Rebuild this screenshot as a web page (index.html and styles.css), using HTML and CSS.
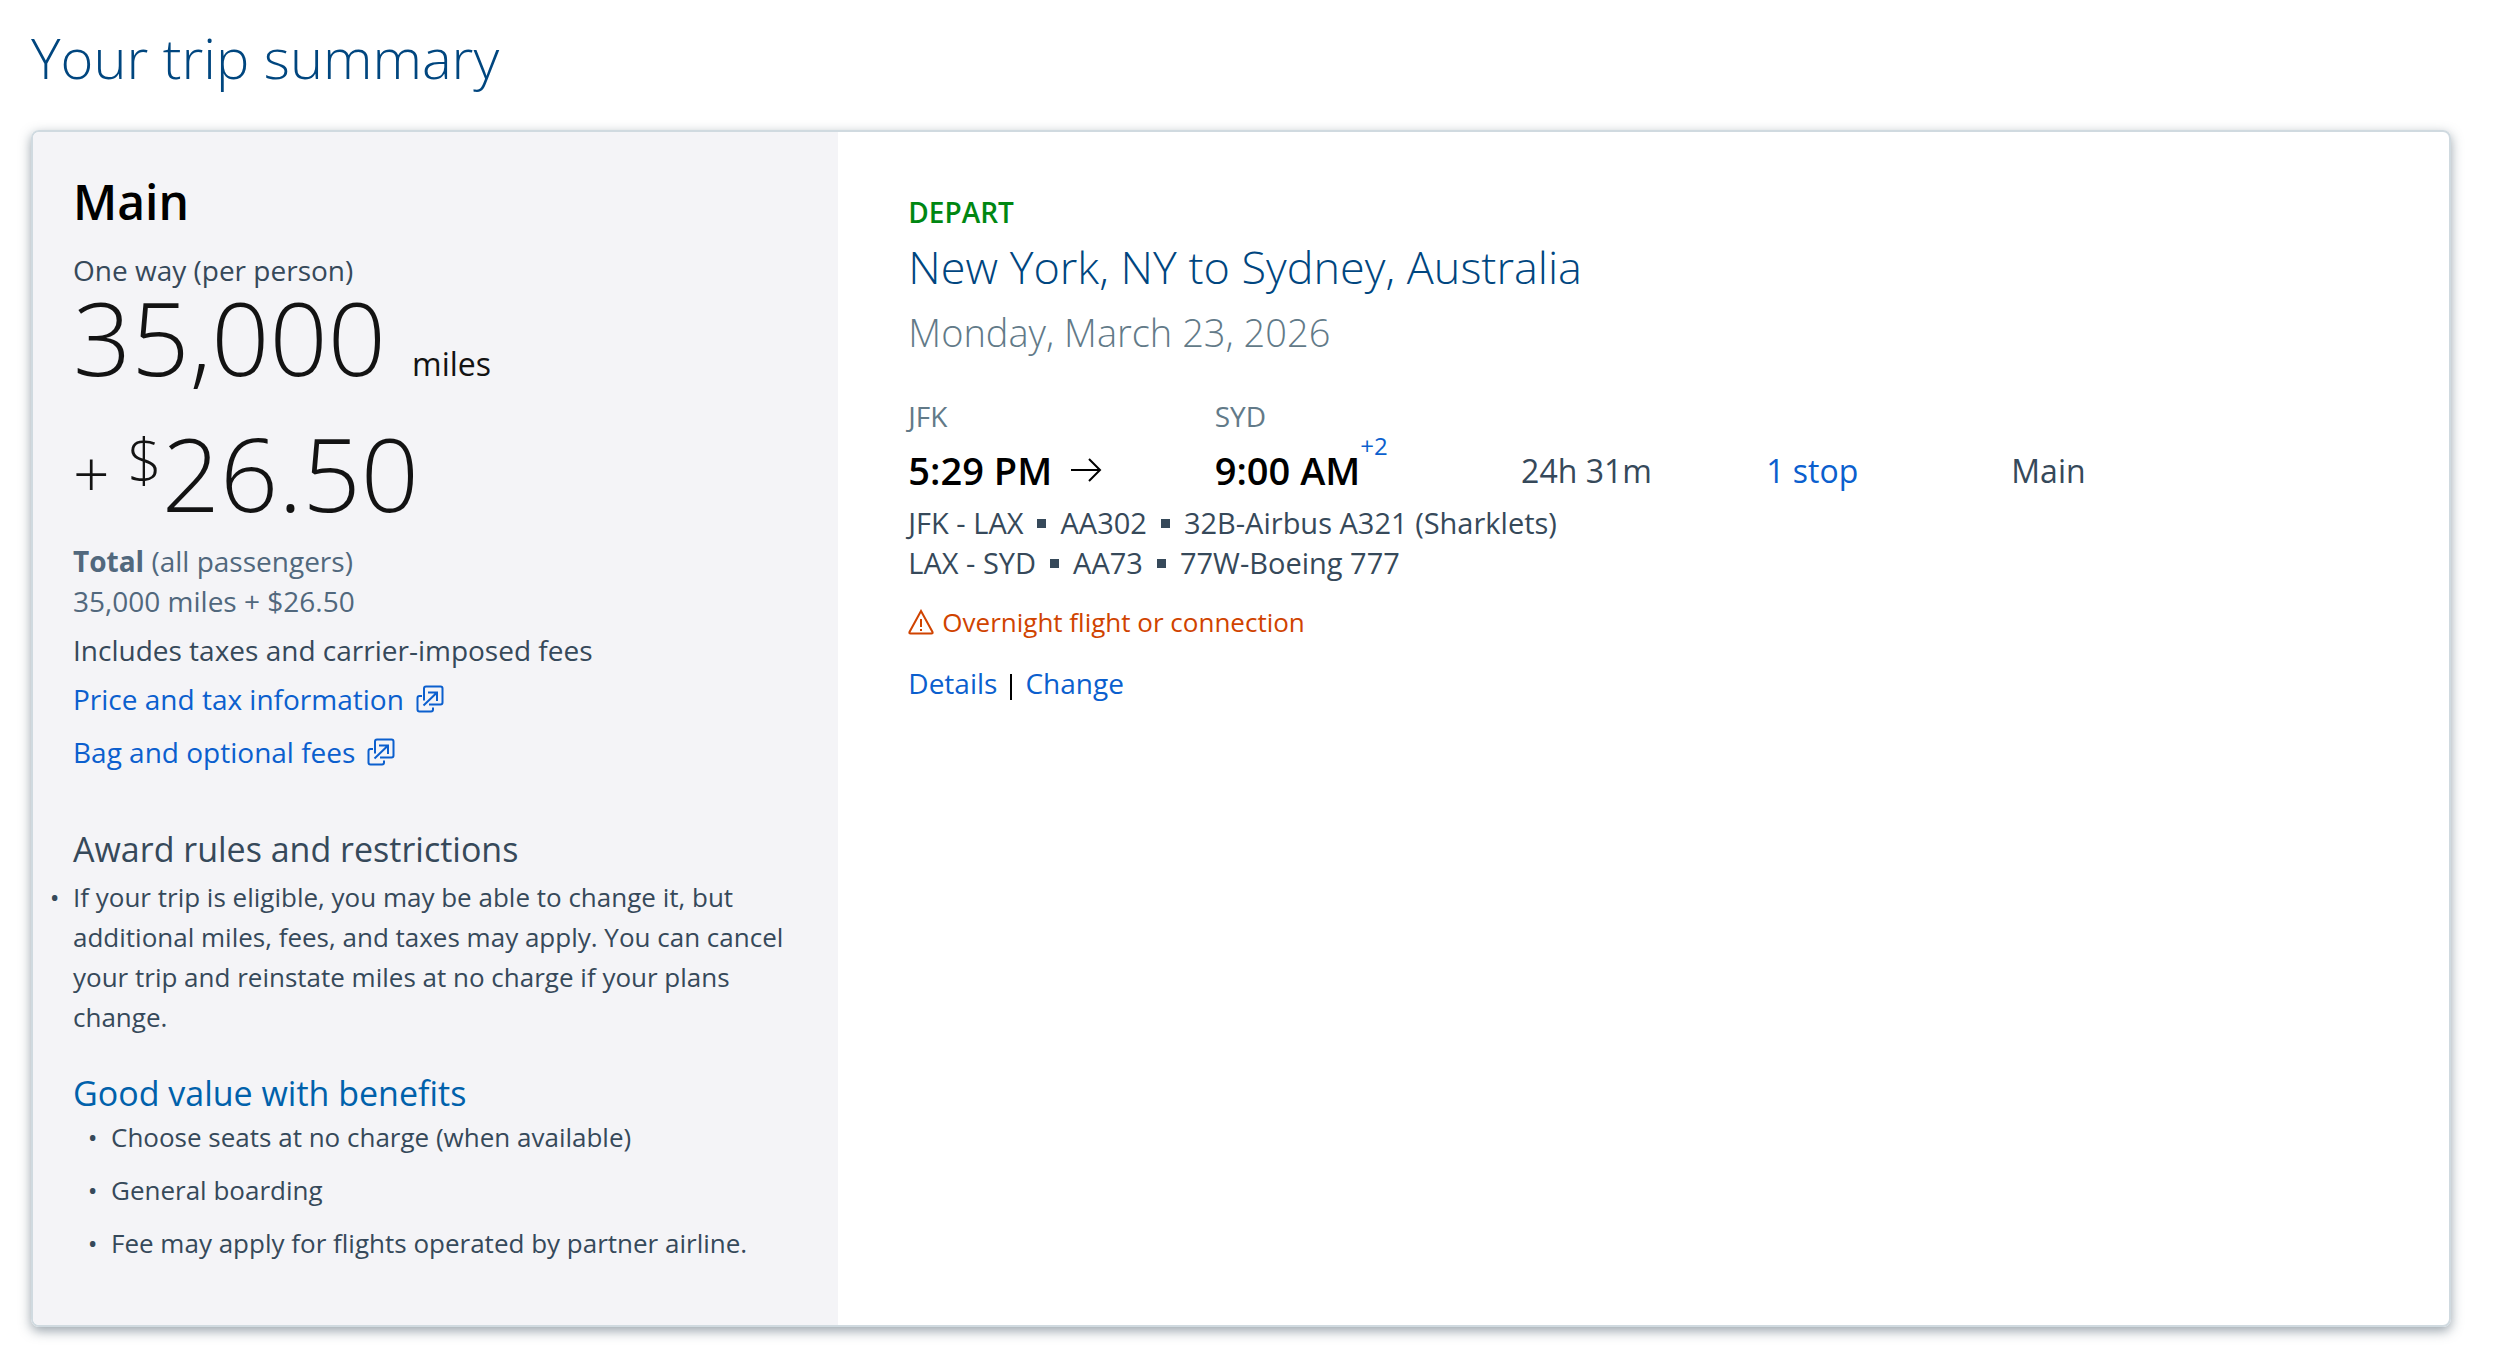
FILE: index.html
```html
<!DOCTYPE html>
<html lang="en">
<head>
    <meta charset="UTF-8">
    <meta name="viewport" content="width=device-width, initial-scale=1.0">
    <title>Your trip summary</title>
    <link rel="stylesheet" href="styles.css">
</head>
<body>
    <h1>Your trip summary</h1>
    <main class="trip-card">
        <section class="price-panel">
            <h2 class="fare-name">Main</h2>
            <p class="per-person">One way (per person)</p>
            <p class="price">35,000<span class="unit">miles</span></p>
            <p class="price price-cash"><span class="plus">+</span><span class="currency">$</span>26.50</p>
            <p class="total"><strong>Total</strong> (all passengers)<br>35,000 miles + $26.50</p>
            <p class="fees-note">Includes taxes and carrier-imposed fees</p>
            <a class="info-link" href="#price-info">Price and tax information
                <svg class="popup-icon" viewBox="0 0 28 28" aria-hidden="true">
                    <path d="M6 11H3.500Q1.500 11 1.500 13V24.500Q1.500 26.500 3.500 26.500H15Q17 26.500 17 24.500V22.500M8 15.500V3.500Q8 1.500 10 1.500H24.500Q26.500 1.500 26.500 3.500V17.500Q26.500 19.500 24.500 19.500H13M7.500 20.500L20.500 8M12 7.500H21V16"/>
                </svg>
            </a>
            <a class="info-link" href="#bag-fees">Bag and optional fees
                <svg class="popup-icon" viewBox="0 0 28 28" aria-hidden="true">
                    <path d="M6 11H3.500Q1.500 11 1.500 13V24.500Q1.500 26.500 3.500 26.500H15Q17 26.500 17 24.500V22.500M8 15.500V3.500Q8 1.500 10 1.500H24.500Q26.500 1.500 26.500 3.500V17.500Q26.500 19.500 24.500 19.500H13M7.500 20.500L20.500 8M12 7.500H21V16"/>
                </svg>
            </a>

            <h3 class="rules-title">Award rules and restrictions</h3>
            <ul class="rules">
                <li>If your trip is eligible, you may be able to change it, but additional miles, fees, and taxes may apply. You can cancel your trip and reinstate miles at no charge if your plans change.</li>
            </ul>

            <h3 class="benefits-title">Good value with benefits</h3>
            <ul class="benefits">
                <li>Choose seats at no charge (when available)</li>
                <li>General boarding</li>
                <li>Fee may apply for flights operated by partner airline.</li>
            </ul>
        </section>

        <section class="flight-panel">
            <p class="direction">DEPART</p>
            <h2 class="route">New York, NY to Sydney, Australia</h2>
            <p class="date">Monday, March 23, 2026</p>

            <div class="flight-row">
                <div>
                    <div class="airport">JFK</div>
                    <div class="time">5:29 PM
                        <svg class="arrow-icon" viewBox="0 0 32 28" aria-hidden="true">
                            <path d="M1 14H30M19 3L30 14L19 25"/>
                        </svg>
                    </div>
                </div>
                <div>
                    <div class="airport">SYD</div>
                    <div class="time">9:00 AM<a class="next-day" href="#arrival">+2</a></div>
                </div>
                <div class="detail">24h 31m</div>
                <div class="detail"><a href="#stops">1 stop</a></div>
                <div class="detail">Main</div>
            </div>

            <ul class="segments">
                <li><span>JFK - LAX</span><span>AA302</span><span>32B-Airbus A321 (Sharklets)</span></li>
                <li><span>LAX - SYD</span><span>AA73</span><span>77W-Boeing 777</span></li>
            </ul>

            <p class="warning">
                <svg class="warning-icon" viewBox="0 0 26 26" aria-hidden="true">
                    <path d="M13 2L24.500 23Q25 24.500 23.500 24.500H2.500Q1 24.500 1.500 23ZM13 10V18M13 20V22"/>
                </svg>
                Overnight flight or connection
            </p>

            <div class="actions">
                <a href="#details">Details</a>
                <a href="#change">Change</a>
            </div>
        </section>
    </main>
</body>
</html>
```
FILE: styles.css
```css
* {
    box-sizing: border-box;
}
body {
    font-family: "Open Sans", "Noto Sans", sans-serif;
    font-size: 28px;
    line-height: 40px;
    color: #36495a;
    background-color: #fff;
    margin: 0;
    padding: 21px 51px 26px 31px;
}
h1, h2, h3, p, ul {
    margin: 0;
    padding: 0;
    font-weight: 400;
}
a {
    color: #0b5fce;
    text-decoration: none;
}
h1 {
    font-size: 56px;
    font-weight: 300;
    line-height: 72px;
    color: #00467f;
    margin-bottom: 37px;
}
.trip-card {
    display: grid;
    grid-template-columns: 1fr 2fr;
    border: 2px solid #d0dae0;
    border-radius: 8px;
    box-shadow: 0 4px 12px rgba(54, 73, 90, 0.5);
    overflow: hidden;
}

/* price column */
.price-panel {
    background-color: #f4f4f7;
    padding: 40px 40px 62px;
}
.fare-name {
    font-size: 48px;
    font-weight: 600;
    line-height: 60px;
    color: #000;
    margin-bottom: 18px;
}
.price {
    font-size: 102px;
    font-weight: 300;
    line-height: 90px;
    color: #131313;
    margin-top: 2px;
}
.unit {
    font-size: 32px;
    font-weight: 400;
    line-height: 40px;
    margin-left: 26px;
}
.price-cash {
    display: flex;
    margin-top: 44px;
}
.plus {
    font-size: 64px;
    margin-right: 18px;
}
.currency {
    font-size: 60px;
    line-height: 64px;
}
.total {
    color: #51687d;
    margin-top: 23px;
}
.fees-note {
    margin-top: 9px;
}
.info-link {
    display: flex;
    align-items: center;
    gap: 12px;
    margin-top: 9px;
}
.info-link + .info-link {
    margin-top: 13px;
}
.popup-icon {
    width: 28px;
    height: 28px;
    fill: none;
    stroke: #0b5fce;
    stroke-width: 2;
}
.rules-title, .benefits-title {
    font-size: 34px;
    line-height: 44px;
}
.rules-title {
    margin-top: 55px;
    margin-bottom: 6px;
}
.benefits-title {
    color: #0061ab;
    margin-top: 34px;
    margin-bottom: 2px;
}
.rules, .benefits {
    font-size: 26px;
    list-style-type: "•\00a0\00a0";
}
.benefits {
    padding-left: 38px;
}
.benefits li + li {
    margin-top: 13px;
}

/* flight column */
.flight-panel {
    padding: 60px 70px;
}
.direction {
    font-weight: 600;
    color: #008712;
    margin-bottom: 5px;
}
.route {
    font-size: 45px;
    font-weight: 300;
    line-height: 60px;
    color: #00467f;
    margin-bottom: 9px;
}
.date {
    font-size: 38px;
    font-weight: 300;
    line-height: 52px;
    color: #627a88;
    margin-bottom: 38px;
}
.flight-row {
    display: grid;
    grid-template-columns: 5fr 5fr 4fr 4fr 6fr;
    align-items: end;
    margin-bottom: 3px;
}
.airport {
    color: #627a88;
    margin-bottom: 4px;
}
.time {
    display: flex;
    align-items: center;
    font-size: 38px;
    font-weight: 600;
    line-height: 60px;
    color: #000;
}
.arrow-icon {
    width: 32px;
    height: 28px;
    margin-left: 18px;
    fill: none;
    stroke: #000;
    stroke-width: 2;
}
.next-day {
    align-self: flex-start;
    font-size: 24px;
    font-weight: 400;
    line-height: 12px;
}
.detail {
    font-size: 32px;
    line-height: 58px;
}
.segments {
    font-size: 29px;
    list-style: none;
}
.segments span + span::before {
    content: "";
    display: inline-block;
    width: 9px;
    height: 9px;
    margin: 0 14px;
    vertical-align: 6px;
    background-color: #36495a;
}
.warning {
    display: flex;
    align-items: center;
    gap: 8px;
    font-size: 26px;
    color: #d04300;
    margin-top: 19px;
}
.warning-icon {
    width: 26px;
    height: 26px;
    fill: none;
    stroke: #d04300;
    stroke-width: 2;
}
.actions {
    display: flex;
    align-items: center;
    margin-top: 21px;
}
.actions a + a::before {
    content: "";
    display: inline-block;
    width: 2px;
    height: 26px;
    margin: 0 13px;
    vertical-align: middle;
    background-color: #000;
}
```
